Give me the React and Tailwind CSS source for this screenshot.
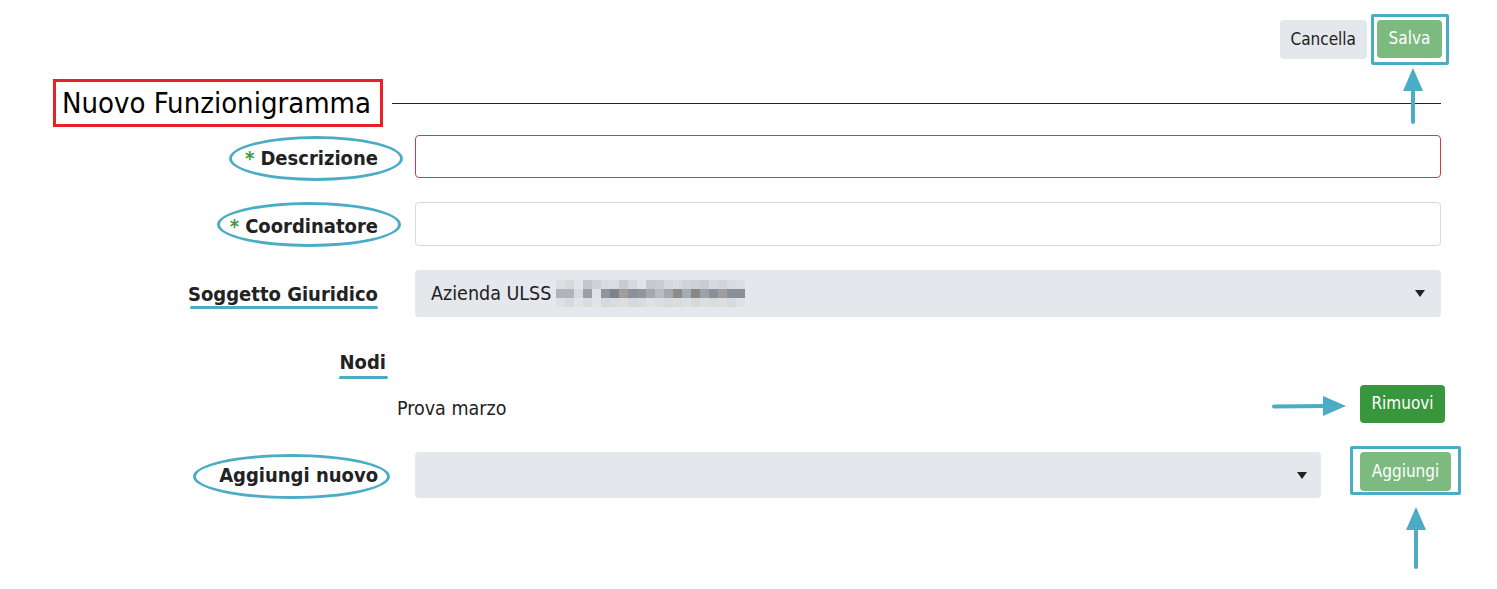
import React from 'react';

const blue = '#4bacc6';

const pixRows = [
    ['#dcdee1', '#d6d8dc', '#e2e4e7', '#c3c7cc', '#cfd2d6', '#d9dbdf', '#dadcdf', '#c8ccd0', '#d7d9dd', '#e2e4e7', '#c6c9cd', '#c9ccd0', '#d5d7db', '#d9dbde', '#d0d3d7', '#cdd0d4', '#c9ccd0', '#d7d9dc', '#d1d4d8', '#d9dbdf', '#dcdee1'],
    ['#b0b3b8', '#b0b3b8', '#d8dadd', '#9a9fa5', '#e0e2e5', '#8f959b', '#7d838b', '#a09e9c', '#8a9099', '#8f959b', '#a5a8ac', '#b8bcc2', '#a5a8ac', '#8f8b89', '#a4adb5', '#8a8682', '#9aa2aa', '#8a9099', '#a09e9c', '#8a9099', '#8a9099'],
    ['#dee0e3', '#d8dadd', '#e1e3e6', '#dadcdf', '#e2e4e7', '#d6d8dc', '#d9dbdf', '#dcdee1', '#d6d9dc', '#d9dbdf', '#dfe1e4', '#dcdee1', '#d8dadd', '#dadcdf', '#dcdee1', '#d7d9dd', '#dcdee1', '#d9dbde', '#dcdee1', '#d8dadd', '#dfe1e4'],
];

const Blurred = () => (
    <span className="inline-flex flex-col ml-[5px]">
        {pixRows.map((row, i) => (
            <span key={i} className="flex">
                {row.map((c, j) => (
                    <span key={j} className="block w-[9px] h-[9px]" style={{ background: c }} />
                ))}
            </span>
        ))}
    </span>
);

const Caret = () => (
    <span className="w-0 h-0 border-l-[5px] border-r-[5px] border-t-[7px] border-l-transparent border-r-transparent border-t-[#222]" />
);

const UpArrow = ({ x, y, len }) => (
    <svg className="absolute" style={{ left: x - 12, top: y }} width="24" height={len} viewBox={`0 0 24 ${len}`}>
        <polygon points={`12,0 22,23 2,23`} fill={blue} />
        <line x1="12" y1="20" x2="12" y2={len - 2} stroke={blue} strokeWidth="4" strokeLinecap="round" />
    </svg>
);

const Label = ({ req, w = 'w-[325px]', pt = 'pt-[3px]', children }) => (
    <div className={`${w} ${pt} text-right font-bold text-[20px] text-[#222]`}>
        {req && <span className="text-[#3a9a3d] mr-[6px]">*</span>}
        {children}
    </div>
);

export default function App() {
    return (
        <div className="relative w-[1497px] h-[589px] bg-white text-[#222] font-['DejaVu_Sans_Condensed','DejaVu_Sans',sans-serif] overflow-hidden">
            <div className="flex justify-end gap-[10px] pt-5 pr-[55px]">
                <button className="h-[39px] px-[11px] rounded-[4px] bg-[#e4e7eb] text-[17px] text-[#222]">Cancella</button>
                <button className="h-[38px] w-[65px] rounded-[4px] bg-[#7dba7f] text-[17px] text-white">Salva</button>
            </div>

            <div className="flex items-center mt-[20px] pl-[53px] pr-[56px]">
                <div className="h-[48px] w-[330px] border-[3px] border-[#e8202a] pl-[6px] flex items-center text-[29px] text-black leading-none">
                    Nuovo Funzionigramma
                </div>
                <div className="flex-1 h-px bg-[#222] ml-[9px]" />
            </div>

            <div className="flex items-center mt-[8px] pl-[53px]">
                <Label req>Descrizione</Label>
                <div className="ml-[37px] w-[1026px] h-[43px] rounded-[4px] border border-[#dc3545]" />
            </div>

            <div className="flex items-center mt-[24px] pl-[53px]">
                <Label req>Coordinatore</Label>
                <div className="ml-[37px] w-[1026px] h-[44px] rounded-[4px] border border-[#dadada]" />
            </div>

            <div className="flex items-center mt-[24px] pl-[53px]">
                <Label pt="pt-[1px]">Soggetto Giuridico</Label>
                <div className="ml-[37px] w-[1026px] h-[47px] rounded-[4px] bg-[#e4e7eb] flex items-center pl-[16px] pr-[16px] text-[19.5px]">
                    <span>Azienda ULSS</span>
                    <Blurred />
                    <span className="flex-1" />
                    <Caret />
                </div>
            </div>

            <div className="flex items-center mt-[30px] pl-[53px] h-[30px]">
                <Label w="w-[333px]" pt="pt-0">Nodi</Label>
            </div>

            <div className="flex items-center mt-[8px] pl-[397px] pr-[52px] h-[38px]">
                <span className="text-[19.5px] flex-1 pt-[10px]">Prova marzo</span>
                <button className="h-[38px] w-[85px] rounded-[4px] bg-[#38963c] text-[17px] text-white">Rimuovi</button>
            </div>

            <div className="flex items-start mt-[29px] pl-[53px]">
                <div className="h-[46px] flex items-center">
                    <Label pt="pt-0">Aggiungi nuovo</Label>
                </div>
                <div className="ml-[37px] w-[906px] h-[46px] rounded-[4px] bg-[#e4e7eb] flex items-center justify-end pr-[14px]">
                    <Caret />
                </div>
                <button className="ml-[39px] h-[39px] w-[91px] rounded-[4px] bg-[#7dba7f] text-[17px] text-white">Aggiungi</button>
            </div>

            {/* annotations */}
            <div className="absolute left-[1371px] top-[14px] w-[78px] h-[51px] border-[3px] border-[#4bacc6] rounded-[2px]" />
            <UpArrow x={1413} y={68} len={56} />

            <div className="absolute left-[229px] top-[136px] w-[174px] h-[45px] border-[3px] border-[#4bacc6] rounded-[50%]" />
            <div className="absolute left-[217px] top-[202px] w-[184px] h-[45px] border-[3px] border-[#4bacc6] rounded-[50%]" />
            <div className="absolute left-[190px] top-[306px] w-[188px] h-[3px] bg-[#4bacc6] rounded-full" />
            <div className="absolute left-[339px] top-[376px] w-[49px] h-[3px] bg-[#4bacc6] rounded-full" />

            <svg className="absolute left-[1270px] top-[394px]" width="78" height="24" viewBox="0 0 78 24">
                <line x1="4" y1="12.5" x2="56" y2="12" stroke={blue} strokeWidth="4" strokeLinecap="round" />
                <polygon points="53,2 76,12 53,22" fill={blue} />
            </svg>

            <div className="absolute left-[193px] top-[454px] w-[197px] h-[45px] border-[3px] border-[#4bacc6] rounded-[50%]" />
            <div className="absolute left-[1350px] top-[446px] w-[111px] h-[49px] border-[3px] border-[#4bacc6] rounded-[2px]" />
            <UpArrow x={1416} y={507} len={62} />
        </div>
    );
}
